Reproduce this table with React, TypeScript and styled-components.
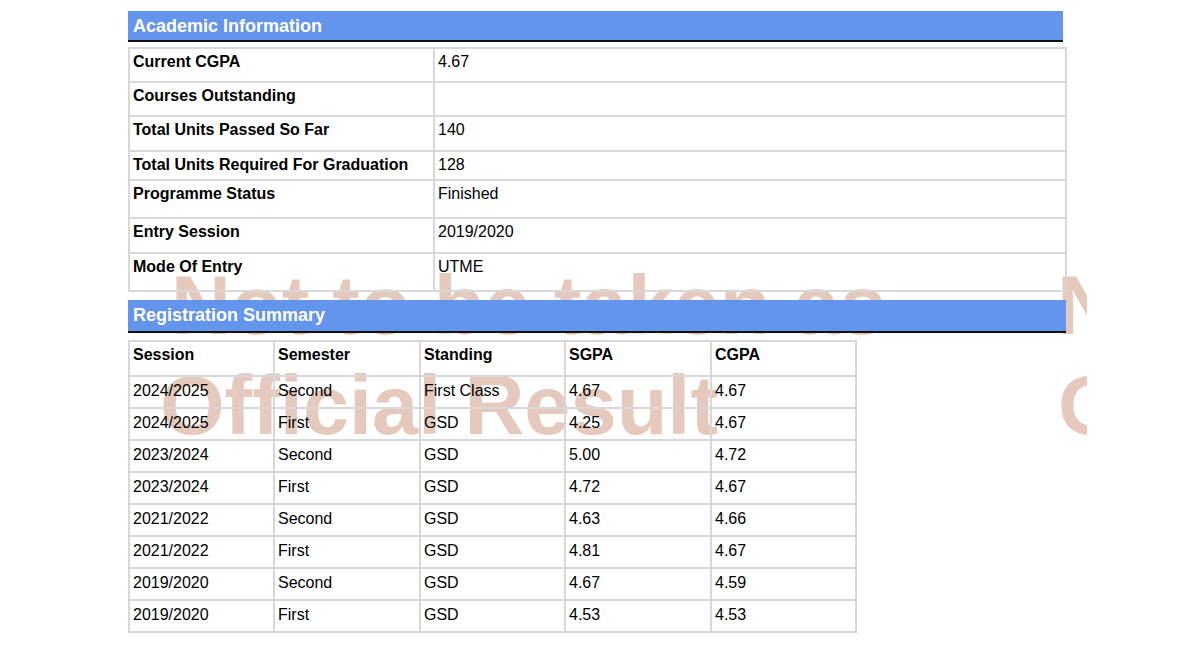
import React from "react";
import styled, { createGlobalStyle } from "styled-components";

const GlobalStyle = createGlobalStyle`
  html, body {
    margin: 0;
    padding: 0;
    background: #ffffff;
  }
  body {
    font-family: "Liberation Sans", Arial, Helvetica, sans-serif;
    color: #000000;
  }
`;

const Page = styled.div`
  position: relative;
  width: 1200px;
  height: 650px;
  overflow: hidden;
  box-sizing: border-box;
  padding: 11px 0 0 128px;
`;

const WatermarkLayer = styled.div`
  position: absolute;
  left: 0;
  top: 256px;
  width: 1087px;
  height: 215px;
  overflow: hidden;
  display: flex;
  flex-direction: column;
  pointer-events: none;
  z-index: 0;
`;

const WatermarkRow = styled.div<{ $offset: number }>`
  display: flex;
  padding-left: ${(p) => p.$offset}px;
`;

const WatermarkText = styled.div<{ $period: number }>`
  flex: 0 0 ${(p) => p.$period}px;
  font-size: 83px;
  font-weight: 700;
  line-height: 100px;
  color: #e6c9bd;
  white-space: nowrap;
`;

const Content = styled.div`
  position: relative;
  z-index: 1;
  display: flex;
  flex-direction: column;
  align-items: flex-start;
`;

const SectionBar = styled.div<{ $width: number; $height: number; $gap: number }>`
  width: ${(p) => p.$width}px;
  height: ${(p) => p.$height}px;
  margin-top: ${(p) => p.$gap}px;
  box-sizing: border-box;
  background: #6495ed;
  border-bottom: 2px solid #111111;
  color: #ffffff;
  font-size: 18px;
  font-weight: 700;
  line-height: normal;
  padding: 5px 0 0 5px;
`;

const Grid = styled.div<{ $cols: string; $gap: number }>`
  display: grid;
  grid-template-columns: ${(p) => p.$cols};
  margin-top: ${(p) => p.$gap}px;
  border-top: 2px solid #d8d8d8;
  border-left: 2px solid #d8d8d8;
`;

const Cell = styled.div<{ $h: number; $bold?: boolean; $padTop: number }>`
  height: ${(p) => p.$h}px;
  box-sizing: border-box;
  border-right: 2px solid #d8d8d8;
  border-bottom: 2px solid #d8d8d8;
  padding: ${(p) => p.$padTop}px 3px 0 3px;
  font-size: 16px;
  line-height: normal;
  font-weight: ${(p) => (p.$bold ? 700 : 400)};
  white-space: nowrap;
`;

const academic: { label: string; value: string; h: number }[] = [
  { label: "Current CGPA", value: "4.67", h: 34 },
  { label: "Courses Outstanding", value: "", h: 34 },
  { label: "Total Units Passed So Far", value: "140", h: 35 },
  { label: "Total Units Required For Graduation", value: "128", h: 29 },
  { label: "Programme Status", value: "Finished", h: 38 },
  { label: "Entry Session", value: "2019/2020", h: 35 },
  { label: "Mode Of Entry", value: "UTME", h: 38 },
];

const headers = ["Session", "Semester", "Standing", "SGPA", "CGPA"];

const registrations: string[][] = [
  ["2024/2025", "Second", "First Class", "4.67", "4.67"],
  ["2024/2025", "First", "GSD", "4.25", "4.67"],
  ["2023/2024", "Second", "GSD", "5.00", "4.72"],
  ["2023/2024", "First", "GSD", "4.72", "4.67"],
  ["2021/2022", "Second", "GSD", "4.63", "4.66"],
  ["2021/2022", "First", "GSD", "4.81", "4.67"],
  ["2019/2020", "Second", "GSD", "4.67", "4.59"],
  ["2019/2020", "First", "GSD", "4.53", "4.53"],
];

const watermarkLines = [
  { text: "Not to be taken as", offset: 171, period: 886 },
  { text: "Official Result", offset: 160, period: 898 },
];

const Watermark: React.FC = () => (
  <WatermarkLayer aria-hidden="true">
    {watermarkLines.map((line) => (
      <WatermarkRow key={line.text} $offset={line.offset}>
        <WatermarkText $period={line.period}>{line.text}</WatermarkText>
        <WatermarkText $period={line.period}>{line.text}</WatermarkText>
      </WatermarkRow>
    ))}
  </WatermarkLayer>
);

export default function App() {
  return (
    <>
      <GlobalStyle />
      <Page>
        <Watermark />
        <Content>
          <SectionBar $width={935} $height={31} $gap={0}>
            Academic Information
          </SectionBar>
          <Grid $cols="305px 632px" $gap={5}>
            {academic.map((row) => (
              <React.Fragment key={row.label}>
                <Cell $h={row.h} $padTop={4} $bold>
                  {row.label}
                </Cell>
                <Cell $h={row.h} $padTop={4}>
                  {row.value}
                </Cell>
              </React.Fragment>
            ))}
          </Grid>
          <SectionBar $width={938} $height={33} $gap={8}>
            Registration Summary
          </SectionBar>
          <Grid $cols="145px 146px 145px 146px 145px" $gap={7}>
            {headers.map((h) => (
              <Cell key={h} $h={35} $padTop={4} $bold>
                {h}
              </Cell>
            ))}
            {registrations.map((row, r) =>
              row.map((v, c) => (
                <Cell key={`${r}-${c}`} $h={32} $padTop={5}>
                  {v}
                </Cell>
              ))
            )}
          </Grid>
        </Content>
      </Page>
    </>
  );
}
